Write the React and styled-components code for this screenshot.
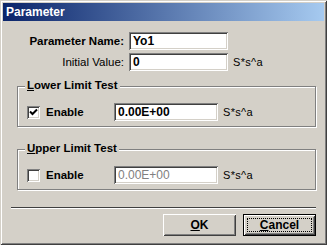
import React from "react";
import styled, { createGlobalStyle } from "styled-components";

const GlobalStyle = createGlobalStyle`
html, body {
  margin:0;
  padding:0;
  background:#d4d0c8;
}
body {
  font-family:"Liberation Sans", Arial, sans-serif;
  font-size:11.5px;
  color:#000;
}
`;

const Window = styled.div`
width:327px;
height:245px;
box-sizing:border-box;
padding:3px;
background:#d4d0c8;
display:flex;
flex-direction:column;
box-shadow:inset 1px 1px 0 #d4d0c8, inset -1px -1px 0 #404040,
  inset 2px 2px 0 #fff, inset -2px -2px 0 #808080;
`;

const TitleBar = styled.div`
height:18px;
display:flex;
align-items:center;
padding-left:3px;
background:linear-gradient(to right, #0a246a, #a6caf0);
color:#fff;
font-weight:bold;
font-size:12px;
`;

const FieldRow = styled.div`
display:flex;
align-items:center;
height:18px;
margin-top:${p => p.top}px;
`;

const Label = styled.div`
width:121px;
text-align:right;
font-weight:${p => (p.bold ? "bold" : "normal")};
`;

const TextBox = styled.div`
box-sizing:border-box;
width:${p => p.width}px;
height:18px;
margin-left:${p => p.left}px;
padding:0 4px;
display:flex;
align-items:center;
background:#fff;
font-size:12px;
font-weight:${p => (p.disabled ? "normal" : "bold")};
color:${p => (p.disabled ? "#808080" : "#000")};
box-shadow:inset 1px 1px 0 #808080, inset -1px -1px 0 #fff,
  inset 2px 2px 0 #404040, inset -2px -2px 0 #d4d0c8;
`;

const Unit = styled.div`
margin-left:5px;
font-size:11px;
letter-spacing:0.3px;
`;

const GroupBox = styled.div`
position:relative;
box-sizing:border-box;
width:299px;
margin-left:14px;
margin-top:${p => p.top}px;
padding:16px 0 5px 9px;
border:1px solid #808080;
box-shadow:inset 1px 1px 0 #fff, 1px 1px 0 #fff;
`;

const Legend = styled.div`
position:absolute;
top:-8px;
left:7px;
padding:0 2px;
background:#d4d0c8;
font-weight:bold;
`;

const Key = styled.span`
text-decoration:underline;
`;

const CheckRow = styled.div`
display:flex;
align-items:center;
height:18px;
`;

const CheckBox = styled.div`
box-sizing:border-box;
width:13px;
height:13px;
background:#fff;
display:flex;
align-items:center;
justify-content:center;
box-shadow:inset 1px 1px 0 #808080, inset -1px -1px 0 #fff,
  inset 2px 2px 0 #404040, inset -2px -2px 0 #d4d0c8;
`;

const CheckText = styled.div`
width:68px;
margin-left:6px;
font-weight:bold;
`;

const Separator = styled.div`
width:305px;
margin:17px 0 0 8px;
height:1px;
background:#404040;
box-shadow:0 1px 0 #fff;
`;

const ButtonRow = styled.div`
display:flex;
justify-content:flex-end;
gap:7px;
margin-top:6px;
padding-right:8px;
`;

const Button = styled.div`
box-sizing:border-box;
width:73px;
height:22px;
display:flex;
align-items:center;
justify-content:center;
font-size:12px;
font-weight:bold;
background:#d4d0c8;
border:${p => (p.primary ? "1px solid #000" : "none")};
box-shadow:inset 1px 1px 0 #fff, inset -1px -1px 0 #404040,
  inset 2px 2px 0 #d4d0c8, inset -2px -2px 0 #808080;
outline:${p => (p.primary ? "1px dotted #000" : "none")};
outline-offset:-5px;
`;

const Check = () => (
  <svg width="9" height="9" viewBox="0 0 9 9">
    <path d="M1 3.5 L3.5 6 L8 1.5" fill="none" stroke="#000" strokeWidth="2" />
  </svg>
);

const LimitGroup = ({ title, top, checked, disabled }) => (
  <GroupBox top={top}>
    <Legend>
      <Key>{title[0]}</Key>
      {title.slice(1)}
    </Legend>
    <CheckRow>
      <CheckBox>{checked && <Check />}</CheckBox>
      <CheckText>Enable</CheckText>
      <TextBox width={104} left={0} disabled={disabled}>0.00E+00</TextBox>
      <Unit>S*s^a</Unit>
    </CheckRow>
  </GroupBox>
);

export default function App() {
  return (
    <>
      <GlobalStyle />
      <Window>
        <TitleBar>Parameter</TitleBar>
        <FieldRow top={11}>
          <Label bold>Parameter Name:</Label>
          <TextBox width={99} left={5}>Yo1</TextBox>
        </FieldRow>
        <FieldRow top={3}>
          <Label>Initial Value:</Label>
          <TextBox width={99} left={5}>0</TextBox>
          <Unit>S*s^a</Unit>
        </FieldRow>
        <LimitGroup title="Lower Limit Test" top={15} checked />
        <LimitGroup title="Upper Limit Test" top={22} disabled />
        <Separator />
        <ButtonRow>
          <Button>
            <Key>O</Key>K
          </Button>
          <Button primary>
            <Key>C</Key>ancel
          </Button>
        </ButtonRow>
      </Window>
    </>
  );
}
